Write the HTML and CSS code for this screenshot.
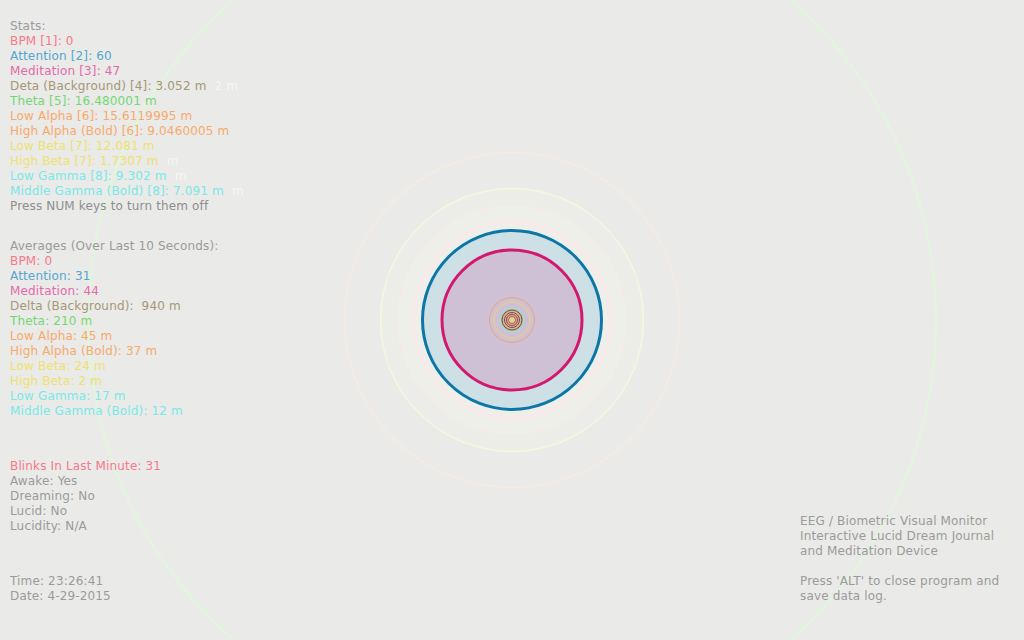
FILE: index.html
```html
<!DOCTYPE html>
<html lang="en">
	<head>
		<meta charset="utf-8" />
		<title>EEG / Biometric Visual Monitor</title>
		<link rel="stylesheet" href="styles.css">
	</head>
	<body>
		<svg class="canvas" width="1024" height="640" viewBox="0 0 1024 640">
			<circle cx="512" cy="320" r="424" fill="none" stroke="#e1f5dd" stroke-width="2.5" />
			<circle cx="512" cy="320" r="167.5" fill="none" stroke="#f7ebdf" stroke-width="1.5" />
			<circle cx="512" cy="320" r="131.5" fill="#ececE8" stroke="#f6f6dc" stroke-width="1.5" />
			<circle cx="512" cy="320" r="114.5" fill="#efefea" stroke="#f4ece4" stroke-width="1.2" />
			<circle cx="512" cy="320" r="98" fill="none" stroke="#f5ebeb" stroke-width="5" />
			<circle cx="512" cy="320" r="89.5" fill="#cde0e6" stroke="#0b76a8" stroke-width="3" />
			<circle cx="512" cy="320" r="70" fill="#cfc1d5" stroke="#d3186f" stroke-width="3" />
			<circle cx="512" cy="320" r="22.5" fill="none" stroke="#f2a274" stroke-width="1" />
			<circle cx="512" cy="320" r="18" fill="none" stroke="#eed46c" stroke-width="1" />
			<circle cx="512" cy="320" r="12" fill="#92d6a4" stroke="#a8e0dc" stroke-width="1" />
			<circle cx="512" cy="320" r="10" fill="none" stroke="#e2183c" stroke-width="1" />
			<circle cx="512" cy="320" r="7.5" fill="none" stroke="#e2183c" stroke-width="1" />
			<circle cx="512" cy="320" r="5.5" fill="none" stroke="#e2183c" stroke-width="1" />
			<circle cx="512" cy="320" r="3.5" fill="#d6d894" stroke="#e8405c" stroke-width="1" />
		</svg>

		<main class="screen">
			<section class="column">
				<div class="block">
					<p class="muted">Stats:</p>
					<p class="bpm">BPM [1]: 0</p>
					<p class="attention">Attention [2]: 60</p>
					<p class="meditation">Meditation [3]: 47</p>
					<p class="delta">Deta (Background) [4]: 3.052 m<span class="ghost">2 m</span></p>
					<p class="theta">Theta [5]: 16.480001 m</p>
					<p class="alpha">Low Alpha [6]: 15.6119995 m</p>
					<p class="alpha">High Alpha (Bold) [6]: 9.0460005 m</p>
					<p class="beta">Low Beta [7]: 12.081 m</p>
					<p class="beta">High Beta [7]: 1.7307 m<span class="ghost">m</span></p>
					<p class="gamma">Low Gamma [8]: 9.302 m<span class="ghost">m</span></p>
					<p class="gamma">Middle Gamma (Bold) [8]: 7.091 m<span class="ghost">m</span></p>
					<p class="note">Press NUM keys to turn them off</p>
				</div>

				<div class="block averages">
					<p class="muted">Averages (Over Last 10 Seconds):</p>
					<p class="bpm">BPM: 0</p>
					<p class="attention">Attention: 31</p>
					<p class="meditation">Meditation: 44</p>
					<p class="delta">Delta (Background):&nbsp; 940 m</p>
					<p class="theta">Theta: 210 m</p>
					<p class="alpha">Low Alpha: 45 m</p>
					<p class="alpha">High Alpha (Bold): 37 m</p>
					<p class="beta">Low Beta: 24 m</p>
					<p class="beta">High Beta: 2 m</p>
					<p class="gamma">Low Gamma: 17 m</p>
					<p class="gamma">Middle Gamma (Bold): 12 m</p>
				</div>

				<div class="block state">
					<p class="bpm">Blinks In Last Minute: 31</p>
					<p class="muted">Awake: Yes</p>
					<p class="muted">Dreaming: No</p>
					<p class="muted">Lucid: No</p>
					<p class="muted">Lucidity: N/A</p>
				</div>

				<div class="block clock">
					<p class="muted">Time: 23:26:41</p>
					<p class="muted">Date: 4-29-2015</p>
				</div>
			</section>

			<section class="column about">
				<p class="muted">EEG / Biometric Visual Monitor</p>
				<p class="muted">Interactive Lucid Dream Journal</p>
				<p class="muted">and Meditation Device</p>
				<p class="muted spaced">Press 'ALT' to close program and</p>
				<p class="muted">save data log.</p>
			</section>
		</main>
	</body>
</html>
```

FILE: styles.css
```css
html,
body {
	margin: 0;
	height: 100%;
}

body {
	position: relative;
	overflow: hidden;
	background: #eaeae8;
	font-family: 'DejaVu Sans', Verdana, sans-serif;
	font-size: 12px;
	line-height: 15px;
	letter-spacing: 0.15px;
}

p {
	margin: 0;
	white-space: pre;
}

.canvas {
	position: absolute;
	top: 0;
	left: 0;
}

.screen {
	position: relative;
	display: flex;
	justify-content: space-between;
	align-items: flex-end;
	height: 100%;
	box-sizing: border-box;
	padding: 19px 0 36px 10px;
}

.column {
	display: flex;
	flex-direction: column;
	align-self: stretch;
}

.about {
	width: 224px;
	justify-content: flex-end;
}

.averages {
	margin-top: 25px;
}

.state {
	margin-top: 40px;
}

.clock {
	margin-top: 40px;
}

.spaced {
	margin-top: 15px;
}

.muted {
	color: #9b9b9b;
}

.note {
	color: #8e8e8e;
}

.bpm {
	color: #f77989;
}

.attention {
	color: #55a6cf;
}

.meditation {
	color: #e669ab;
}

.delta {
	color: #a69777;
}

.theta {
	color: #76d676;
}

.alpha {
	color: #f8a96b;
}

.beta {
	color: #efe171;
}

.gamma {
	color: #79e9e7;
}

/* leftover digits from the previous frame */
.ghost {
	margin-left: 8px;
	color: rgba(255, 255, 255, 0.6);
}
```
